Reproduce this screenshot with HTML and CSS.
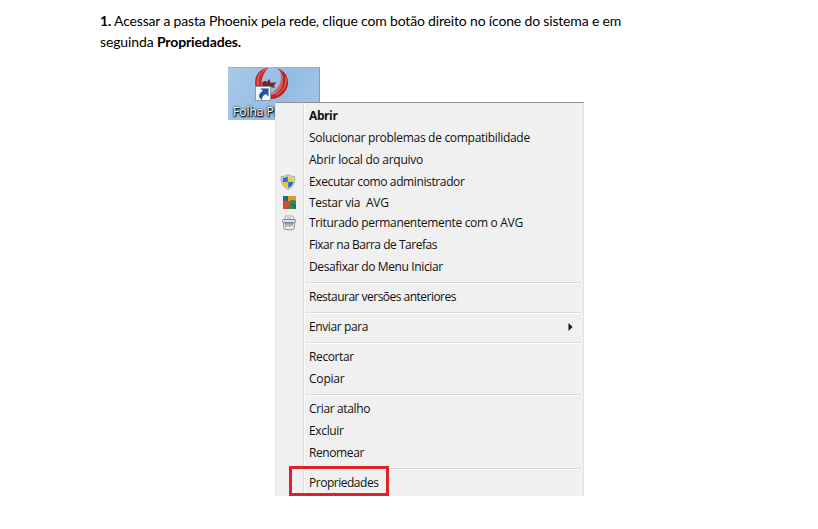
FILE: index.html
```html
<!DOCTYPE html>
<html lang="pt-BR">
<head>
<meta charset="utf-8">
<title>Propriedades</title>
<link rel="stylesheet" href="styles.css">
</head>
<body>
<p class="step"><span class="line first"><b>1.</b> Acessar a pasta Phoenix pela rede, clique com botão direito no ícone do sistema e em</span><span class="line second">seguinda <b>Propriedades.</b></span></p>
<div class="figure">
  <div class="shortcut">
    <svg class="phoenix" width="38" height="34" viewBox="0 0 38 34">
      <path d="M16 0C8 0 3 7 3 15c0 6 3 10 7 13l3-3C8 20 8 9 16 0Z" fill="#c92a2b"/>
      <path d="M25 0c8 3 12 9 11 16-1 8-8 15-17 15l-3-4c9 0 15-6 15-15 0-5-2-9-6-12Z" fill="#c32024"/>
      <path d="M27 3c3 4 3 11-1 16-3 4-6 6-9 7 8 0 13-5 14-12 0-4-1-8-4-11Z" fill="#e95449"/>
      <path d="M14 1C8 4 5 9 6 17M34 9c1 8-3 15-10 18" fill="none" stroke="#ee8075" stroke-width="1"/>
      <path d="M10 15c2-3 4-2 5-1l2-3 2 4 5-1-2 4 1 2-4-1c-3 2-8 1-9-2Z" fill="#74272b"/>
      <rect x="3.500" y="18.500" width="15" height="14" fill="#f5f8fb" stroke="#8c98a5"/>
      <path d="M8.500 20.500H16.500V28.500L14 26C11 27 10 29 10 32 5 29 7 25 11 23Z" fill="#1d55a5"/>
    </svg>
    <span class="caption">Folha Phoenix</span>
  </div>
  <div class="menu">
    <div class="item"><b class="t-open">Abrir</b></div>
    <div class="item"><span class="t-compat">Solucionar problemas de compatibilidade</span></div>
    <div class="item"><span class="t-local">Abrir local do arquivo</span></div>
    <div class="item">
      <svg class="icon" width="16" height="16" viewBox="0 0 16 16">
        <path d="M8 .5C6 2 3.500 2.500 1.300 2.600 1 8 2 12.500 8 15.500 14 12.500 15 8 14.700 2.600 12.500 2.500 10 2 8 .5Z" fill="#d5dde0" stroke="#8a9aa2" stroke-width=".8"/>
        <path d="M7.800 2.200C6 3.300 4.500 3.700 2.800 3.900V8h5Z" fill="#2875c5"/>
        <path d="M8.200 2.200C10 3.300 11.500 3.700 13.200 3.900V8h-5Z" fill="#f7cb27"/>
        <path d="M2.800 8h5v6C4.500 12.300 3.200 10.500 2.800 8Z" fill="#f4c320"/>
        <path d="M13.200 8h-5v6C11.500 12.300 12.800 10.500 13.200 8Z" fill="#216fbe"/>
      </svg>
      <span class="t-admin">Executar como administrador</span></div>
    <div class="item short">
      <svg class="icon avg" width="16" height="16" viewBox="0 0 16 16">
        <rect x="2" y="2" width="13" height="13" fill="#3d8a48"/>
        <path d="M2 2h7L7 8H2Z" fill="#1d6a7b"/>
        <path d="M7 2h8v5c-3-2-5-1-8 1Z" fill="#e39a2c"/>
        <path d="M2 7c3-1 5 0 7 1l-2 7H2Z" fill="#d84b2a"/>
        <path d="M9 7c2-1 4-1 6 0v8H8Z" fill="#348b42"/>
        <path d="M10 9l5 2v4Z" fill="#275e83"/>
      </svg>
      <span class="t-avg">Testar via&nbsp; AVG</span></div>
    <div class="item short shred">
      <svg class="icon" width="16" height="16" viewBox="0 0 16 16">
        <path d="M4 5V1h8l1 4" fill="#fff" stroke="#a4abb0"/>
        <path d="M5.500 3h5" stroke="#9aa5ae"/>
        <rect x="1.500" y="4.500" width="13" height="3" rx="1" fill="#dce2e6" stroke="#78838c"/>
        <path d="M2.500 8h11l-.5 6q-5 2-10 0Z" fill="#eef1f3" stroke="#89939b"/>
        <path d="M5 8v4M7 8v3M9 8v4M11 8v3" stroke="#69747d"/>
      </svg>
      <span class="t-shred">Triturado permanentemente com o AVG</span></div>
    <div class="item"><span class="t-pin">Fixar na Barra de Tarefas</span></div>
    <div class="item"><span class="t-unpin">Desafixar do Menu Iniciar</span></div>
    <div class="sep"></div>
    <div class="item"><span class="t-restore">Restaurar versões anteriores</span></div>
    <div class="sep"></div>
    <div class="item"><span class="t-send">Enviar para</span><svg class="arrow" width="5" height="8" viewBox="0 0 5 8"><path d="M0.500 0L4.500 4L0.500 8Z" fill="#151515"/></svg></div>
    <div class="sep"></div>
    <div class="item"><span class="t-cut">Recortar</span></div>
    <div class="item"><span class="t-copy">Copiar</span></div>
    <div class="sep"></div>
    <div class="item"><span class="t-link">Criar atalho</span></div>
    <div class="item"><span class="t-delete">Excluir</span></div>
    <div class="item"><span class="t-rename">Renomear</span></div>
    <div class="sep"></div>
    <div class="item"><span class="t-props">Propriedades</span></div>
    <div class="highlight"></div>
  </div>
</div>
</body>
</html>
```
FILE: styles.css
```css
* { box-sizing: border-box; }
body { margin: 0; padding: 10px 0 0 100px; background: #fff; color: #000; overflow: hidden; }
.step { margin: 0; font: 14px/21px Lato, sans-serif; }
.line { display: block; width: max-content; white-space: nowrap; }
.first { letter-spacing: -.17px; }
.second { letter-spacing: -.13px; }
.figure { position: relative; width: 356px; height: 429px; margin: 15px 0 0 128px; }
.shortcut { width: 92px; height: 53px; overflow: hidden; background: linear-gradient(120deg, #a9c9e6, #94bce2 60%, #a5c8e9); border-top: 1px solid #8db4d9; border-right: 1px solid #749fc8; }
.phoenix { display: block; margin-left: 24px; }
.caption { display: block; width: max-content; margin: 2px 0 0 5px; color: #fff; font: 12px/16px "Open Sans", sans-serif; letter-spacing: 0; text-shadow: 0 1px 2px #000, 0 0 2px #000, 1px 1px 1px #111; }
.menu { position: absolute; left: 47px; top: 35px; width: 309px; height: 394px; padding: 2px 0 0; border-top: 1px solid #8e8e8e; border-left: 1px solid #e3e3e3; border-right: 1px solid #e2e2e2; background: linear-gradient(90deg, transparent 27px, #e0e0e0 27px, #e0e0e0 28px, #fbfbfb 28px, #fbfbfb 29px, transparent 29px), #f0f0f0; color: #111; font: 12px/22px "Open Sans", sans-serif; }
.item { position: relative; display: flex; align-items: center; height: 22px; padding-left: 33px; white-space: pre; }
.item > span, .item > b { line-height: 20px; }
.item.short { height: 20px; }
.item.shred { height: 21px; padding-bottom: 1px; }
.icon { position: absolute; left: 4px; top: 3px; }
.short .icon { top: 2px; }
.short .avg { left: 5px; top: 1px; }
.shred .icon { left: 5px; }
.arrow { margin: 0 10px 0 auto; }
.sep { height: 8px; padding-top: 4px; }
.sep::before { content: ""; display: block; height: 0; margin: 0 2px 0 30px; border-top: 1px solid #dcdcdc; border-bottom: 1px solid #fff; }
.highlight { position: absolute; left: 13px; top: 363px; width: 100px; height: 30px; border: 3px solid #df2028; }
.t-open { letter-spacing: -.4px; }
.t-compat { letter-spacing: -.3px; }
.t-local { letter-spacing: -.27px; }
.t-admin { letter-spacing: -.38px; }
.t-avg { letter-spacing: -.25px; }
.t-shred { letter-spacing: -.32px; }
.t-pin { letter-spacing: -.48px; }
.t-unpin { letter-spacing: -.37px; }
.t-restore { letter-spacing: -.52px; }
.t-send { letter-spacing: -.4px; }
.t-cut { letter-spacing: -.38px; }
.t-copy { letter-spacing: -.2px; }
.t-link { letter-spacing: -.36px; }
.t-delete { letter-spacing: -.35px; }
.t-rename { letter-spacing: -.4px; }
.t-props { letter-spacing: -.48px; }
```
